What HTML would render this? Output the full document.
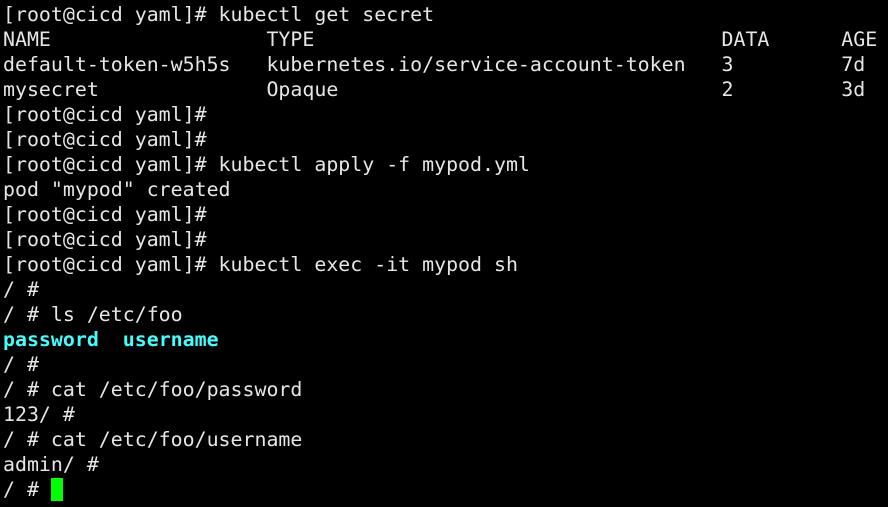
<!DOCTYPE html>
<html><head><style>
html,body{margin:0;padding:0;background:#000;width:888px;height:507px;overflow:hidden}
pre{margin:0;padding:2px 0 0 3px;font-family:"DejaVu Sans Mono","Liberation Mono",monospace;font-size:19.9px;line-height:25px;color:#e6e6e6;white-space:pre}
.c{color:#40ffff;font-weight:bold}
.cur{display:inline-block;width:12px;height:23px;background:#00ff00;vertical-align:-5px}
</style></head><body><pre>[root@cicd yaml]# kubectl get secret
NAME                  TYPE                                  DATA      AGE
default-token-w5h5s   kubernetes.io/service-account-token   3         7d
mysecret              Opaque                                2         3d
[root@cicd yaml]#
[root@cicd yaml]#
[root@cicd yaml]# kubectl apply -f mypod.yml
pod "mypod" created
[root@cicd yaml]#
[root@cicd yaml]#
[root@cicd yaml]# kubectl exec -it mypod sh
/ #
/ # ls /etc/foo
<span class="c">password</span>  <span class="c">username</span>
/ #
/ # cat /etc/foo/password
123/ #
/ # cat /etc/foo/username
admin/ #
/ # <span class="cur"></span></pre></body></html>
